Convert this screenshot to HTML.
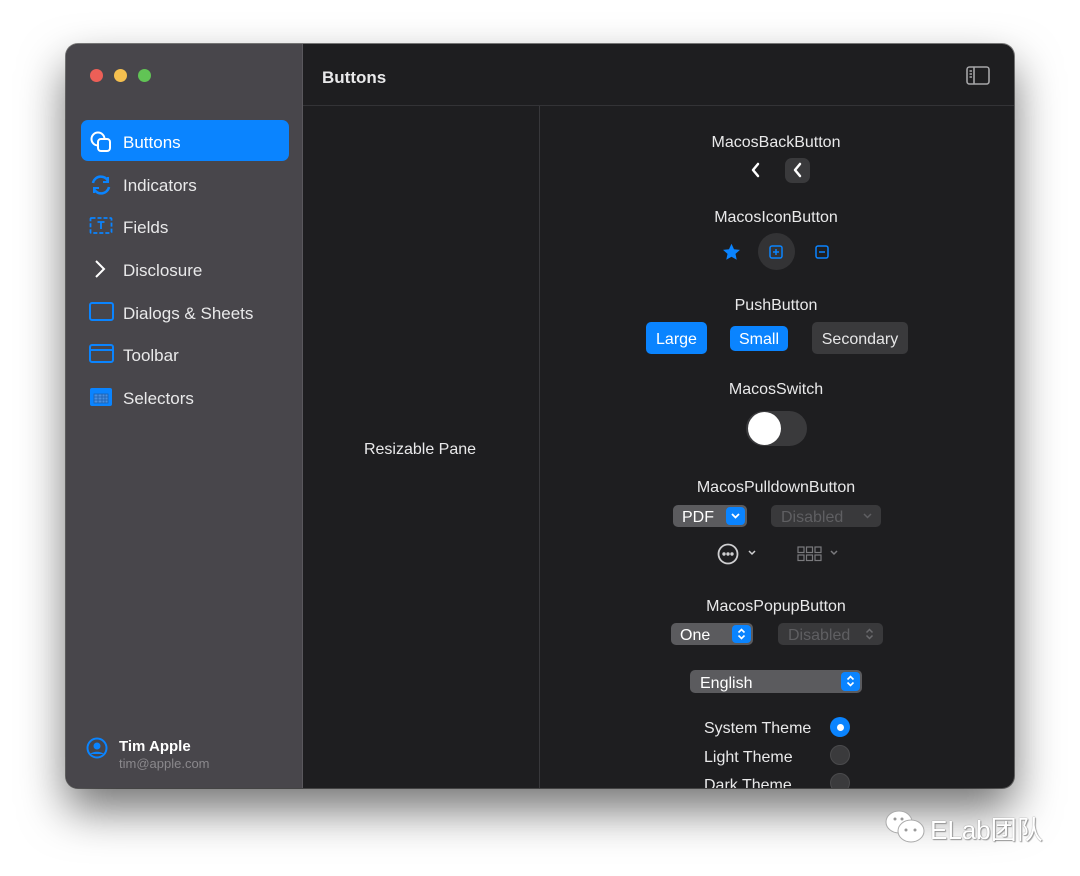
<!DOCTYPE html>
<html><head><meta charset="utf-8"><style>
*{margin:0;padding:0;box-sizing:border-box}
body{width:1080px;height:876px;background:#fff;position:relative;overflow:hidden;font-family:"Liberation Sans","Noto Sans CJK SC",sans-serif;color:#e9e9ea}
.win{position:absolute;left:66px;top:44px;width:948px;height:744px;border-radius:12px;background:#1e1e20;overflow:hidden;box-shadow:0 22px 45px rgba(0,0,0,.55),0 0 0 1px rgba(0,0,0,.5)}
.side{position:absolute;left:0;top:0;width:237px;height:744px;background:#48464b;border-right:1px solid #5a585d}
.dot{position:absolute;top:25px;width:13px;height:13px;border-radius:50%}
.a{position:absolute;font-size:17px;white-space:nowrap}
.m{margin-top:2px}
.c{position:absolute;font-size:16px;white-space:nowrap;transform:translateX(-50%);margin-top:2px}
.sel{position:absolute;left:15px;top:76px;width:208px;height:41px;border-radius:7px;background:#0a84ff}
.ic{position:absolute}
.btn{position:absolute;border-radius:5px;font-size:16px;text-align:center;color:#fff}
</style></head><body>
<div class="win">
 <div class="side">
  <div class="dot" style="left:24px;background:#ec5f57"></div>
  <div class="dot" style="left:48px;background:#f4bf4f"></div>
  <div class="dot" style="left:72px;background:#61c455"></div>
  <div class="sel"></div>
  <svg class="ic" style="left:23px;top:86px" width="24" height="24" viewBox="0 0 24 24" fill="none" stroke="#fff" stroke-width="2"><circle cx="9" cy="9" r="6.5"/><rect x="9" y="9" width="12" height="12" rx="3" fill="#0a84ff"/></svg>
  <div class="a m" style="left:57px;top:87px;color:#fff">Buttons</div>
  <svg class="ic" style="left:23px;top:129px" width="24" height="24" viewBox="0 0 24 24" fill="none" stroke="#0a84ff" stroke-width="2.5"><path d="M4 10a8 8 0 0 1 15-2"/><path d="M20 14a8 8 0 0 1-15 2"/><path d="M19 4v5h-5" stroke-width="2"/><path d="M5 20v-5h5" stroke-width="2"/></svg>
  <div class="a m" style="left:57px;top:130px">Indicators</div>
  <svg class="ic" style="left:23px;top:172px" width="24" height="20" viewBox="0 0 24 20" fill="none" stroke="#0a84ff" stroke-width="1.8"><rect x="1.5" y="2" width="21" height="15" rx="1" stroke-dasharray="4 2"/><path d="M8.5 6h7M12 6v7"/></svg>
  <div class="a m" style="left:57px;top:172px">Fields</div>
  <svg class="ic" style="left:27px;top:215px" width="14" height="20" viewBox="0 0 14 20" fill="none" stroke="#fff" stroke-width="2"><path d="M3 2l8 8-8 8"/></svg>
  <div class="a m" style="left:57px;top:215px">Disclosure</div>
  <svg class="ic" style="left:23px;top:258px" width="25" height="20" viewBox="0 0 25 20" fill="none" stroke="#0a84ff" stroke-width="2"><rect x="1" y="1" width="23" height="17" rx="2"/></svg>
  <div class="a m" style="left:57px;top:258px">Dialogs &amp; Sheets</div>
  <svg class="ic" style="left:23px;top:300px" width="25" height="20" viewBox="0 0 25 20" fill="none" stroke="#0a84ff" stroke-width="2"><rect x="1" y="1" width="23" height="17" rx="2"/><path d="M1 6h23"/></svg>
  <div class="a m" style="left:57px;top:300px">Toolbar</div>
  <svg class="ic" style="left:24px;top:343px" width="22" height="20" viewBox="0 0 22 20"><rect x="0" y="1" width="22" height="18" rx="2" fill="#0a84ff"/><g fill="#4a8fe0" stroke="#1a5fb0" stroke-width=".8"><rect x="4" y="7" width="14" height="9"/></g><path d="M4 10h14M4 13h14M8 7v9M12 7v9M15 7v9" stroke="#1a5fb0" stroke-width=".8"/></svg>
  <div class="a m" style="left:57px;top:343px">Selectors</div>
  <svg class="ic" style="left:20px;top:693px" width="22" height="22" viewBox="0 0 22 22"><circle cx="11" cy="11" r="9.5" fill="none" stroke="#0a84ff" stroke-width="2"/><circle cx="11" cy="9" r="3.5" fill="#0a84ff"/><path d="M4.5 17c2-3 11-3 13 0" fill="#0a84ff"/></svg>
  <div class="a" style="left:53px;top:694px;font-size:15px;font-weight:bold;color:#fff">Tim Apple</div>
  <div class="a" style="left:53px;top:712px;font-size:13px;color:#8a888c">tim@apple.com</div>
 </div>
 <div style="position:absolute;left:237px;top:61px;width:711px;height:1px;background:#333336"></div>
 <div style="position:absolute;left:473px;top:62px;width:1px;height:682px;background:#38383b"></div>
 <div class="a m" style="left:256px;top:22px;font-weight:bold;color:#e9e9ea">Buttons</div>
 <svg class="ic" style="left:900px;top:22px" width="24" height="19" viewBox="0 0 24 19" fill="none" stroke="#a5a5a7" stroke-width="1.6"><rect x="1" y="1" width="22" height="17" rx="2.5"/><path d="M8 1v17M3.5 5h2.5M3.5 8h2.5M3.5 11h2.5"/></svg>
 <div class="c" style="left:354px;top:395px">Resizable Pane</div>

 <div class="c" style="left:710px;top:88px">MacosBackButton</div>
 <svg class="ic" style="left:683px;top:117px" width="14" height="18" viewBox="0 0 14 18" fill="none" stroke="#fff" stroke-width="2.5" stroke-linecap="round" stroke-linejoin="round"><path d="M9 3l-5 6 5 6"/></svg>
 <div style="position:absolute;left:719px;top:114px;width:25px;height:25px;border-radius:7px;background:#3a3a3c"></div>
 <svg class="ic" style="left:725px;top:117px" width="14" height="18" viewBox="0 0 14 18" fill="none" stroke="#fff" stroke-width="2.5" stroke-linecap="round" stroke-linejoin="round"><path d="M9 3l-5 6 5 6"/></svg>

 <div class="c" style="left:710px;top:163px">MacosIconButton</div>
 <svg class="ic" style="left:656px;top:199px" width="19" height="18" viewBox="0 0 24 23"><path d="M12 1l3.2 7 7.6.8-5.7 5.1 1.6 7.5L12 17.6 5.3 21.4l1.6-7.5L1.2 8.8 8.8 8z" fill="#0a84ff"/></svg>
 <div style="position:absolute;left:692px;top:189px;width:37px;height:37px;border-radius:50%;background:#333335"></div>
 <svg class="ic" style="left:703px;top:201px" width="14" height="14" viewBox="0 0 14 14" fill="none" stroke="#0a84ff" stroke-width="1.5"><rect x="1" y="1" width="12" height="12" rx="2"/><path d="M7 4v6M4 7h6"/></svg>
 <svg class="ic" style="left:749px;top:201px" width="14" height="14" viewBox="0 0 14 14" fill="none" stroke="#0a84ff" stroke-width="1.5"><rect x="1" y="1" width="12" height="12" rx="2"/><path d="M4 7h6"/></svg>

 <div class="c" style="left:710px;top:251px">PushButton</div>
 <div class="btn" style="left:580px;top:278px;width:61px;height:32px;line-height:36px;background:#0a84ff">Large</div>
 <div class="btn" style="left:664px;top:282px;width:58px;height:25px;line-height:27px;background:#0a84ff">Small</div>
 <div class="btn" style="left:746px;top:278px;width:96px;height:32px;line-height:36px;background:#3a3a3c;color:#e6e6e7">Secondary</div>

 <div class="c" style="left:710px;top:335px">MacosSwitch</div>
 <div style="position:absolute;left:680px;top:367px;width:61px;height:35px;border-radius:18px;background:#3a3a3c"></div>
 <div style="position:absolute;left:682px;top:368px;width:33px;height:33px;border-radius:50%;background:#fff"></div>

 <div class="c" style="left:710px;top:433px">MacosPulldownButton</div>
 <div class="btn" style="left:607px;top:461px;width:74px;height:22px;background:#5b5b5e"></div>
 <div class="a m" style="left:616px;top:463px;font-size:16px;color:#fff">PDF</div>
 <div style="position:absolute;left:660px;top:463px;width:19px;height:18px;border-radius:4px;background:#0a84ff"></div>
 <svg class="ic" style="left:664px;top:467px" width="11" height="10" viewBox="0 0 11 10" fill="none" stroke="#fff" stroke-width="1.8"><path d="M2 3l3.5 3.5L9 3"/></svg>
 <div class="btn" style="left:705px;top:461px;width:110px;height:22px;background:#39393b"></div>
 <div class="a m" style="left:715px;top:463px;font-size:16px;color:#5f5f62">Disabled</div>
 <svg class="ic" style="left:796px;top:467px" width="11" height="10" viewBox="0 0 11 10" fill="none" stroke="#5f5f62" stroke-width="1.5"><path d="M2 3l3.5 3.5L9 3"/></svg>
 <svg class="ic" style="left:651px;top:499px" width="22" height="22" viewBox="0 0 22 22" fill="none" stroke="#cfcfd1" stroke-width="1.8"><circle cx="11" cy="11" r="9.5"/><circle cx="7" cy="11" r=".8" fill="#cfcfd1"/><circle cx="11" cy="11" r=".8" fill="#cfcfd1"/><circle cx="15" cy="11" r=".8" fill="#cfcfd1"/></svg>
 <svg class="ic" style="left:681px;top:505px" width="10" height="8" viewBox="0 0 10 8" fill="none" stroke="#cfcfd1" stroke-width="1.5"><path d="M2 2l3 3 3-3"/></svg>
 <svg class="ic" style="left:731px;top:502px" width="26" height="16" viewBox="0 0 26 16" fill="none" stroke="#7a7a7d" stroke-width="1.2"><rect x="1" y="1" width="6" height="5.5"/><rect x="9.5" y="1" width="6" height="5.5"/><rect x="18" y="1" width="6" height="5.5"/><rect x="1" y="9" width="6" height="5.5"/><rect x="9.5" y="9" width="6" height="5.5"/><rect x="18" y="9" width="6" height="5.5"/></svg>
 <svg class="ic" style="left:763px;top:505px" width="10" height="8" viewBox="0 0 10 8" fill="none" stroke="#7a7a7d" stroke-width="1.5"><path d="M2 2l3 3 3-3"/></svg>

 <div class="c" style="left:710px;top:552px">MacosPopupButton</div>
 <div class="btn" style="left:605px;top:579px;width:82px;height:22px;background:#5b5b5e"></div>
 <div class="a m" style="left:614px;top:581px;font-size:16px;color:#fff">One</div>
 <div style="position:absolute;left:666px;top:581px;width:19px;height:18px;border-radius:4px;background:#0a84ff"></div>
 <svg class="ic" style="left:670px;top:582px" width="11" height="16" viewBox="0 0 11 16" fill="none" stroke="#fff" stroke-width="1.6"><path d="M2.5 6.5l3-3 3 3M2.5 9.5l3 3 3-3"/></svg>
 <div class="btn" style="left:712px;top:579px;width:105px;height:22px;background:#39393b"></div>
 <div class="a m" style="left:722px;top:581px;font-size:16px;color:#5f5f62">Disabled</div>
 <svg class="ic" style="left:798px;top:582px" width="11" height="16" viewBox="0 0 11 16" fill="none" stroke="#6a6a6d" stroke-width="1.5"><path d="M2.5 6.5l3-3 3 3M2.5 9.5l3 3 3-3"/></svg>

 <div class="btn" style="left:624px;top:626px;width:172px;height:23px;background:#5b5b5e"></div>
 <div class="a m" style="left:634px;top:629px;font-size:16px;color:#fff">English</div>
 <div style="position:absolute;left:775px;top:628px;width:19px;height:19px;border-radius:4px;background:#0a84ff"></div>
 <svg class="ic" style="left:779px;top:629px" width="11" height="16" viewBox="0 0 11 16" fill="none" stroke="#fff" stroke-width="1.6"><path d="M2.5 6.5l3-3 3 3M2.5 9.5l3 3 3-3"/></svg>

 <div class="a m" style="left:638px;top:674px;font-size:16px">System Theme</div>
 <div style="position:absolute;left:764px;top:673px;width:20px;height:20px;border-radius:50%;background:#0a84ff"></div>
 <div style="position:absolute;left:771px;top:680px;width:7px;height:7px;border-radius:50%;background:#fff"></div>
 <div class="a m" style="left:638px;top:703px;font-size:16px">Light Theme</div>
 <div style="position:absolute;left:764px;top:701px;width:20px;height:20px;border-radius:50%;background:#3a3a3c;border:1px solid #4a4a4c"></div>
 <div class="a m" style="left:638px;top:731px;font-size:16px">Dark Theme</div>
 <div style="position:absolute;left:764px;top:729px;width:20px;height:20px;border-radius:50%;background:#3a3a3c;border:1px solid #4a4a4c"></div>
</div>
<svg style="position:absolute;left:884px;top:809px" width="44" height="36" viewBox="0 0 44 36"><ellipse cx="15" cy="13" rx="13" ry="11" fill="#fff" stroke="#aaa"/><ellipse cx="27" cy="22" rx="13" ry="11" fill="#fff" stroke="#aaa"/><circle cx="22" cy="21" r="1.5" fill="#999"/><circle cx="31" cy="21" r="1.5" fill="#999"/><circle cx="11" cy="10" r="1.5" fill="#999"/><circle cx="18" cy="10" r="1.5" fill="#999"/></svg>
<div style="position:absolute;left:930px;top:810px;font-size:26px;color:#fff;text-shadow:0 0 1px #777,1px 1px 1px #999;font-family:'Liberation Sans','Noto Sans CJK SC',sans-serif">ELab团队</div>
</body></html>
